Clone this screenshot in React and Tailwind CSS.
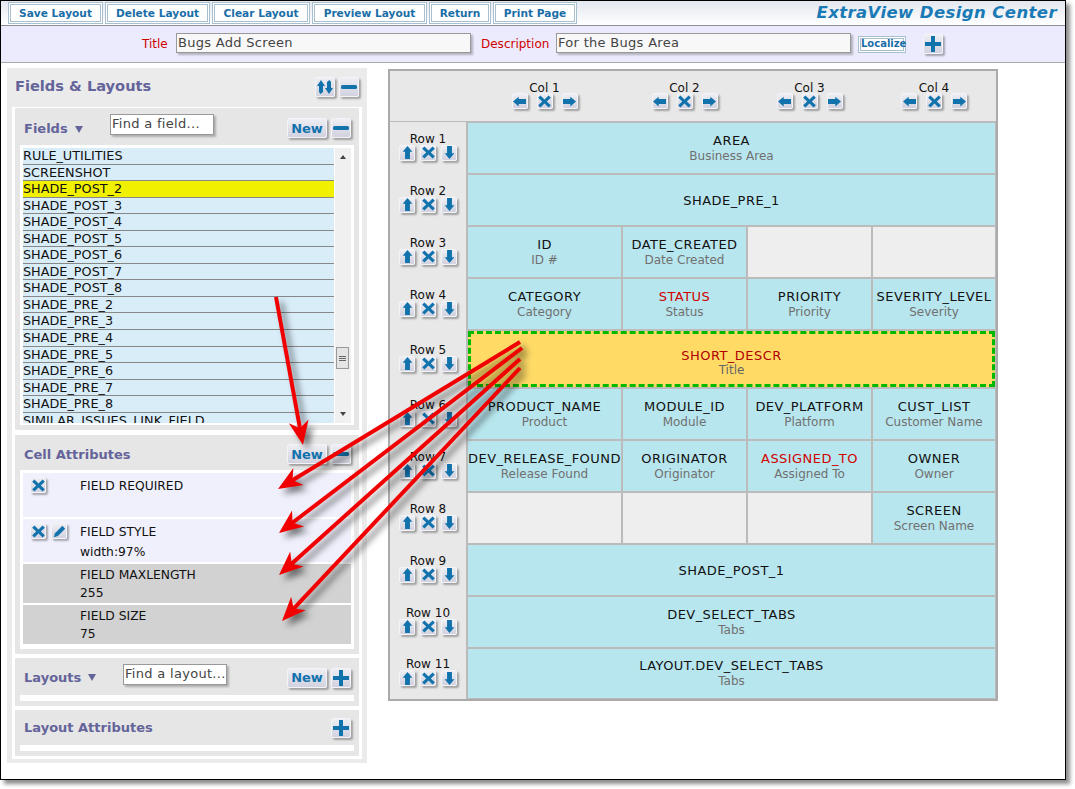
import React from 'react';

const font = "font-['DejaVu_Sans','Verdana',sans-serif]";

const icons = {
  x: <path d="M3 .5 L8 5.5 L13 .5 L15.8 3.3 L10.8 8 L15.8 12.7 L13 15.5 L8 10.5 L3 15.5 L.2 12.7 L5.2 8 L.2 3.3 Z" />,
  left: <path d="M0 8 L7 2 V5 H16 V11 H7 V14 Z" />,
  right: <path d="M16 8 L9 2 V5 H0 V11 H9 V14 Z" />,
  up: <path d="M8 0 L14 7 H11 V16 H5 V7 H2 Z" />,
  down: <path d="M8 16 L14 9 H11 V0 H5 V9 H2 Z" />,
  minus: <rect x="0" y="6" width="16" height="4" rx="1.5" />,
  plus: <path d="M6 0 H10 V6 H16 V10 H10 V16 H6 V10 H0 V6 H6 Z" />,
  pencil: <path d="M11.5 1 L15 4.5 L6 13.5 L1 15 L2.5 10 Z" />,
  swap: <path d="M4 1 L8 7 H6 V13 L3.5 15 L2 13 V7 H0 Z M12 15 L8 9 H10 V3 L12.5 1 L14 3 V9 H16 Z" />,
};

// small beveled button used all over the screen
const IconBtn = ({ name, big }) => (
  <button className={`flex items-center justify-center shrink-0 rounded-[2px] border border-[#f4f4f8] bg-linear-to-b from-[#eeeef4] to-[#d2d2e0] shadow-[2px_2px_2px_rgba(0,0,0,0.3)] ${big ? 'w-[20px] h-[20px]' : 'w-[16px] h-[16px]'}`}>
    <svg viewBox="0 0 16 16" className={`fill-[#1272ac] ${big ? 'w-[16px] h-[16px]' : 'w-[13px] h-[13px]'}`}>{icons[name]}</svg>
  </button>
);

const NewBtn = () => (
  <button className="w-[40px] h-[20px] rounded-[2px] border border-[#f4f4f8] bg-linear-to-b from-[#eeeef4] to-[#d2d2e0] shadow-[2px_2px_2px_rgba(0,0,0,0.3)] text-[13px] leading-none font-bold text-[#1272ac]">New</button>
);

const ToolBtn = ({ label, w }) => (
  <button style={{ width: w }} className="h-[22px] border-[3px] border-double border-[#a8bfd0] bg-white text-[10.6px] leading-none font-bold text-[#1a6ea8]">{label}</button>
);

const TextBox = ({ value, className }) => (
  <div className={`border border-[#999] bg-[#f8f8f8] shadow-[2px_2px_2px_rgba(0,0,0,0.25)] text-[13px] tracking-[0.3px] text-[#444] px-px whitespace-nowrap overflow-hidden ${className}`}>{value}</div>
);

const Toolbar = () => (
  <div className="h-[25px] flex items-center pl-[7px] gap-[2px] border-b border-[#8a8f98] bg-linear-to-b from-[#e3e8ef] to-white relative">
    <ToolBtn label="Save Layout" w={95} />
    <ToolBtn label="Delete Layout" w={105} />
    <ToolBtn label="Clear Layout" w={98} />
    <ToolBtn label="Preview Layout" w={115} />
    <ToolBtn label="Return" w={62} />
    <ToolBtn label="Print Page" w={84} />
    <span className="ml-auto mr-[8px] text-[16.5px] font-bold italic text-[#1a7ab5] tracking-[0.4px]">ExtraView Design Center</span>
  </div>
);

const TitleBar = () => (
  <div className="h-[37px] flex items-center pl-[141px] border-b border-[#aaa] bg-[#ebebfd]">
    <span className="text-[12px] text-[#d00000] w-[34px]">Title</span>
    <TextBox value="Bugs Add Screen" className="w-[295px] h-[20px] mb-[2px] leading-[18px]" />
    <span className="ml-[10px] text-[12px] text-[#d00000] w-[75px]">Description</span>
    <TextBox value="For the Bugs Area" className="w-[295px] h-[20px] mb-[2px] leading-[18px]" />
    <button className="ml-[7px] w-[48px] h-[17px] border-[3px] border-double border-[#a8bfd0] bg-white text-[10px] leading-none font-bold text-[#1a6ea8]">Localize</button>
    <div className="ml-[17px]"><IconBtn name="plus" big /></div>
  </div>
);

const fieldRows = ['RULE_UTILITIES', 'SCREENSHOT', 'SHADE_POST_2', 'SHADE_POST_3', 'SHADE_POST_4', 'SHADE_POST_5', 'SHADE_POST_6', 'SHADE_POST_7', 'SHADE_POST_8', 'SHADE_PRE_2', 'SHADE_PRE_3', 'SHADE_PRE_4', 'SHADE_PRE_5', 'SHADE_PRE_6', 'SHADE_PRE_7', 'SHADE_PRE_8', 'SIMILAR_ISSUES_LINK_FIELD'];

const FieldsList = () => (
  <div className="mx-[5px] h-[280px] bg-white pl-[3px] pt-[3px] pr-[3px] flex">
    <div className="w-[311px] h-[275px] overflow-hidden">
      {fieldRows.map((f) => (
        <div key={f} className={`h-[16.56px] border-b border-[#888] text-[12.8px] leading-[16px] text-[#111] whitespace-nowrap ${f === 'SHADE_POST_2' ? 'bg-[#f0f000]' : 'bg-[#d9edf9]'}`}>{f}</div>
      ))}
    </div>
    <div className="ml-px w-[16px] h-[275px] bg-[#f0f0f0] relative">
      <span className="absolute left-[5px] top-[7px] w-0 h-0 border-x-[3px] border-x-transparent border-b-[4px] border-b-[#444]"></span>
      <span className="absolute left-[1px] top-[199px] w-[13px] h-[22px] bg-[#e4e4e4] border border-[#999] flex flex-col justify-center items-center gap-[1px]">
        <i className="w-[7px] h-px bg-[#666]"></i><i className="w-[7px] h-px bg-[#666]"></i><i className="w-[7px] h-px bg-[#666]"></i>
      </span>
      <span className="absolute left-[5px] top-[264px] w-0 h-0 border-x-[3px] border-x-transparent border-t-[4px] border-t-[#444]"></span>
    </div>
  </div>
);

const AttrRow = ({ label, value, h, gray, icons: btns }) => (
  <div style={{ height: h }} className={`flex ${gray ? 'bg-[#d2d2d2]' : 'bg-[#f0f0fc]'}`}>
    <div className="w-[57px] pl-[7px] pt-[4px] flex gap-[5px]">
      {btns && btns.map((b) => <IconBtn key={b} name={b} />)}
    </div>
    <div className={`text-[12.3px] text-[#111] ${gray ? 'leading-[18px] pt-[2px]' : 'leading-[20px] pt-[3px]'}`}>
      <div>{label}</div>
      {value && <div>{value}</div>}
    </div>
  </div>
);

const CellAttrs = () => (
  <div className="mx-[5px] h-[179px] bg-white px-[3px] pt-[3px] flex flex-col gap-[2px]">
    <AttrRow label="FIELD REQUIRED" h={44} icons={['x']} />
    <AttrRow label="FIELD STYLE" value="width:97%" h={43} icons={['x', 'pencil']} />
    <AttrRow label="FIELD MAXLENGTH" value="255" h={39} gray />
    <AttrRow label="FIELD SIZE" value="75" h={39} gray />
  </div>
);

const SectionTitle = ({ children, className }) => (
  <span className={`text-[13px] font-bold text-[#64649a] flex items-center ${className || ''}`}>{children}</span>
);

const Caret = () => <span className="ml-[7px] w-0 h-0 border-x-[4px] border-x-transparent border-t-[7px] border-t-[#64649a]"></span>;

const LeftPanel = () => (
  <div className="ml-[6px] w-[360px] h-[695px] bg-[#ebebeb] px-[5px] shrink-0">
    <div className="h-[39px] flex items-center pl-[3px] pr-[3px]">
      <span className="text-[14.6px] font-bold text-[#64649a] -mt-[4px]">Fields & Layouts</span>
      <div className="ml-auto flex gap-[4px] mt-[-2px]">
        <IconBtn name="swap" big />
        <IconBtn name="minus" big />
      </div>
    </div>
    <div className="h-[652px] bg-white px-[3px] pt-[1px] flex flex-col">
      {/* Fields */}
      <div className="h-[322px] bg-[#e6e6e6]">
        <div className="h-[37px] flex items-center pl-[9px] pr-[7px] pt-[3px] relative">
          <SectionTitle className="mt-[2px]">Fields <Caret /></SectionTitle>
          <TextBox value="Find a field..." className="absolute left-[95px] top-[6px] w-[104px] h-[21px] leading-[18px] !bg-white" />
          <div className="ml-auto flex gap-[4px] mr-[1px]"><NewBtn /><IconBtn name="minus" big /></div>
        </div>
        <FieldsList />
      </div>
      {/* Cell attributes */}
      <div className="mt-[5px] h-[219px] bg-[#e6e6e6]">
        <div className="h-[35px] flex items-center pl-[9px] pr-[8px] pt-[3px]">
          <SectionTitle className="mt-[2px]">Cell Attributes</SectionTitle>
          <div className="ml-auto flex gap-[4px]"><NewBtn /><IconBtn name="minus" big /></div>
        </div>
        <CellAttrs />
      </div>
      {/* Layouts */}
      <div className="mt-[4px] h-[48px] bg-[#e6e6e6]">
        <div className="h-[37px] flex items-center pl-[9px] pr-[8px] pt-[2px] relative">
          <SectionTitle>Layouts <Caret /></SectionTitle>
          <TextBox value="Find a layout..." className="absolute left-[108px] top-[6px] w-[104px] h-[21px] leading-[18px] !bg-white" />
          <div className="ml-auto flex gap-[4px]"><NewBtn /><IconBtn name="plus" big /></div>
        </div>
        <div className="mx-[5px] h-[6px] bg-white"></div>
      </div>
      {/* Layout attributes */}
      <div className="mt-[4px] h-[46px] bg-[#e6e6e6]">
        <div className="h-[35px] flex items-center pl-[9px] pr-[8px]">
          <SectionTitle>Layout Attributes</SectionTitle>
          <div className="ml-auto"><IconBtn name="plus" big /></div>
        </div>
        <div className="mx-[5px] h-[6px] bg-white"></div>
      </div>
    </div>
  </div>
);

const rows = [
  { n: 1, cells: [{ a: 'AREA', b: 'Business Area', span: 4 }] },
  { n: 2, cells: [{ a: 'SHADE_PRE_1', span: 4 }] },
  { n: 3, cells: [{ a: 'ID', b: 'ID #' }, { a: 'DATE_CREATED', b: 'Date Created' }, {}, {}] },
  { n: 4, cells: [{ a: 'CATEGORY', b: 'Category' }, { a: 'STATUS', b: 'Status', red: true }, { a: 'PRIORITY', b: 'Priority' }, { a: 'SEVERITY_LEVEL', b: 'Severity' }] },
  { n: 5, tall: true, cells: [{ a: 'SHORT_DESCR', b: 'Title', span: 4, selected: true }] },
  { n: 6, cells: [{ a: 'PRODUCT_NAME', b: 'Product' }, { a: 'MODULE_ID', b: 'Module' }, { a: 'DEV_PLATFORM', b: 'Platform' }, { a: 'CUST_LIST', b: 'Customer Name' }] },
  { n: 7, cells: [{ a: 'DEV_RELEASE_FOUND', b: 'Release Found' }, { a: 'ORIGINATOR', b: 'Originator' }, { a: 'ASSIGNED_TO', b: 'Assigned To', red: true }, { a: 'OWNER', b: 'Owner' }] },
  { n: 8, cells: [{}, {}, {}, { a: 'SCREEN', b: 'Screen Name' }] },
  { n: 9, cells: [{ a: 'SHADE_POST_1', span: 4 }] },
  { n: 10, cells: [{ a: 'DEV_SELECT_TABS', b: 'Tabs', span: 4 }] },
  { n: 11, cells: [{ a: 'LAYOUT.DEV_SELECT_TABS', b: 'Tabs', span: 4 }] },
];

const Cell = ({ c }) => {
  if (c.selected) {
    return (
      <div className="col-span-4 border border-[#bbb]">
        <div className="h-full pt-[8px] border-[3px] border-dashed border-[#00b800] bg-[#ffdb66] flex flex-col items-center justify-center leading-[15px]">
          <span className="text-[13px] tracking-[0.45px] text-[#b00000]">{c.a}</span>
          <span className="text-[12px] text-[#666]">{c.b}</span>
        </div>
      </div>
    );
  }
  const empty = !c.a;
  return (
    <div className={`${c.span === 4 ? 'col-span-4' : ''} border border-[#bbb] flex flex-col items-center justify-center leading-[15px] whitespace-nowrap ${empty ? 'bg-[#eeeeee]' : 'bg-[#b8e6ee]'}`}>
      <span className={`text-[13px] tracking-[0.45px] ${c.red ? 'text-[#d00000]' : 'text-[#111]'}`}>{c.a}</span>
      {c.b && <span className="mt-px text-[12px] text-[#707070]">{c.b}</span>}
    </div>
  );
};

const LayoutGrid = () => (
  <div className="ml-[21px] mt-px w-[610px] h-[632px] border-2 border-[#aaa] bg-[#e8e8e8] grid grid-cols-[77px_155px_125px_125px_124px] grid-rows-[51px_repeat(4,52px)_58px_repeat(5,52px)_51px] text-[12px] text-[#111]">
    <div className="border-b border-[#bbb]"></div>
    {[1, 2, 3, 4].map((n) => (
      <div key={n} className="border-b border-[#bbb] flex flex-col items-center pt-[10px] leading-[15px]">
        <span>Col {n}</span>
        <div className="flex gap-[9px] -mt-[3px]">
          <IconBtn name="left" /><IconBtn name="x" /><IconBtn name="right" />
        </div>
      </div>
    ))}
    {rows.map((r) => (
      <React.Fragment key={r.n}>
        <div className="border-r border-[#bbb] flex flex-col items-center justify-center leading-[15px] pb-[4px]">
          <span>Row {r.n}</span>
          <div className="flex gap-[5px] -mt-[2px]">
            <IconBtn name="up" /><IconBtn name="x" /><IconBtn name="down" />
          </div>
        </div>
        {r.cells.map((c, i) => <Cell key={i} c={c} />)}
      </React.Fragment>
    ))}
  </div>
);

// callout arrow, head drawn from the direction of the line
const Arrow = ({ x1, y1, x2, y2 }) => {
  const len = Math.hypot(x2 - x1, y2 - y1);
  const ux = (x2 - x1) / len;
  const uy = (y2 - y1) / len;
  const px = -uy;
  const py = ux;
  const head = `${x2},${y2} ${x2 - ux * 24 + px * 10},${y2 - uy * 24 + py * 10} ${x2 - ux * 17},${y2 - uy * 17} ${x2 - ux * 24 - px * 10},${y2 - uy * 24 - py * 10}`;
  return (
    <g>
      <line x1={x1} y1={y1} x2={x2 - ux * 14} y2={y2 - uy * 14} stroke="#f00000" strokeWidth="4" />
      <polygon points={head} fill="#f00000" />
    </g>
  );
};

const Arrows = () => (
  <svg className="absolute left-0 top-0 w-[1075px] h-[789px] pointer-events-none drop-shadow-[5px_5px_3px_rgba(0,0,0,0.5)]" viewBox="0 0 1075 789">
    <Arrow x1={276} y1={297} x2={303} y2={445} />
    <Arrow x1={520} y1={342} x2={278} y2={489} />
    <Arrow x1={522} y1={348} x2={279} y2={533} />
    <Arrow x1={520} y1={359} x2={279} y2={575} />
    <Arrow x1={520} y1={368} x2={282} y2={621} />
  </svg>
);

const App = () => (
  <div className={`${font} relative w-[1075px] h-[789px] bg-white overflow-hidden`}>
    <div className="w-[1066px] h-[780px] border border-black bg-white shadow-[4px_4px_4px_rgba(0,0,0,0.45)]">
      <Toolbar />
      <TitleBar />
      <div className="flex items-start mt-[5px]">
        <LeftPanel />
        <LayoutGrid />
      </div>
    </div>
    <Arrows />
  </div>
);

export default App;
